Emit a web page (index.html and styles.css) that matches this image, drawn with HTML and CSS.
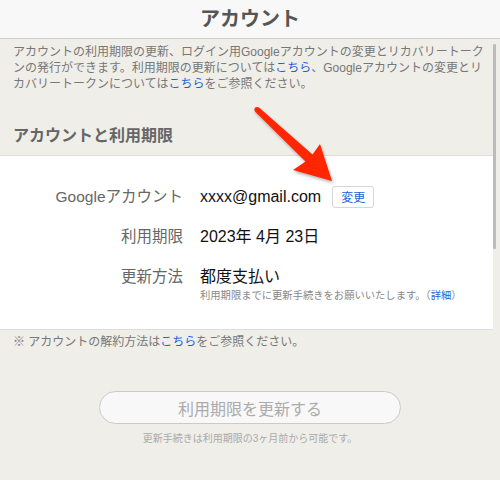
FILE: index.html
```html
<!DOCTYPE html>
<html lang="ja">
<head>
    <meta charset="UTF-8">
    <meta name="viewport" content="width=device-width, initial-scale=1.0">
    <title>アカウント</title>
    <link rel="stylesheet" href="styles.css">
</head>
<body>
    <header class="title-bar">
        <h1>アカウント</h1>
    </header>

    <main class="content">
        <p class="intro">アカウントの利用期限の更新、ログイン用Googleアカウントの変更とリカバリートークンの発行ができます。利用期限の更新については<a href="#">こちら</a>、Googleアカウントの変更とリカバリートークンについては<a href="#">こちら</a>をご参照ください。</p>

        <h2 class="section-title">アカウントと利用期限</h2>

        <section class="panel">
            <div class="row">
                <div class="label">Googleアカウント</div>
                <div class="value">xxxx@gmail.com<button class="small-btn">変更</button></div>
            </div>
            <div class="row">
                <div class="label">利用期限</div>
                <div class="value">2023年 4月 23日</div>
            </div>
            <div class="row">
                <div class="label">更新方法</div>
                <div class="value">
                    都度支払い
                    <div class="hint">利用期限までに更新手続きをお願いいたします。（<a href="#">詳細</a>）</div>
                </div>
            </div>
        </section>

        <p class="note">※ アカウントの解約方法は<a href="#">こちら</a>をご参照ください。</p>

        <div class="renew">
            <button class="renew-btn" disabled>利用期限を更新する</button>
            <p class="renew-hint">更新手続きは利用期限の3ヶ月前から可能です。</p>
        </div>
    </main>

    <div class="scrollbar"></div>

    <!-- annotation arrow -->
    <svg class="arrow" width="100" height="100" viewBox="240 95 100 100">
        <g fill="#ff2600">
            <circle cx="257" cy="109.5" r="2.6"/>
            <polygon points="259,107.5 312.5,154.5 320,144 332,181 293,170 305.5,161.5 255,111.5"/>
        </g>
    </svg>
</body>
</html>
```

FILE: styles.css
```css
body {
    margin: 0;
    padding: 0;
    background-color: #efeee9;
    font-family: "Liberation Sans", "Noto Sans CJK JP", sans-serif;
    color: #777;
    width: 500px;
    height: 480px;
    overflow: hidden;
    position: relative;
}
a {
    color: #1f5fd6;
    text-decoration: none;
}
.title-bar {
    height: 38px;
    background: #f8f8f8;
    border-bottom: 1px solid #cfcfcf;
    text-align: center;
}
.title-bar h1 {
    margin: 0;
    font-size: 20px;
    line-height: 38px;
    font-weight: bold;
    color: #555;
}
.content {
    padding-top: 5px;
}
.intro {
    margin: 0;
    padding: 0 14px 0 13px;
    font-size: 12px;
    line-height: 16px;
    color: #777;
}
.section-title {
    margin: 34px 0 9px;
    padding-left: 13px;
    font-size: 16px;
    line-height: 20px;
    font-weight: bold;
    color: #666;
}
.panel {
    background: #fff;
    border-top: 1px solid #ddd;
    border-bottom: 1px solid #ddd;
    padding: 29px 0 26px;
    margin-right: 7px;
}
.row {
    display: flex;
    align-items: flex-start;
    margin-bottom: 16px;
    line-height: 24px;
}
.row:last-child {
    margin-bottom: 0;
}
.label {
    width: 183px;
    text-align: right;
    font-size: 15.5px;
    color: #666;
}
.value {
    margin-left: 17px;
    font-size: 16px;
    color: #111;
    display: flex;
    flex-direction: column;
    align-items: flex-start;
}
.row:first-child .value {
    flex-direction: row;
    align-items: center;
}
.small-btn {
    margin-left: 11px;
    width: 42px;
    height: 22px;
    padding: 0;
    background: #fff;
    border: 1px solid #d6d6d6;
    border-radius: 3px;
    color: #1f5fd6;
    font-family: "Noto Sans CJK JP", sans-serif;
    font-size: 12px;
    line-height: 20px;
}
.hint {
    font-size: 10.3px;
    line-height: 14px;
    color: #888;
}
.note {
    margin: 4px 0 0;
    padding-left: 13px;
    font-size: 12px;
    line-height: 16px;
    color: #777;
}
.renew {
    display: flex;
    flex-direction: column;
    align-items: center;
    margin-top: 41px;
}
.renew-btn {
    width: 302px;
    height: 33px;
    padding: 0;
    background: #f8f8f8;
    border: 1px solid #cacaca;
    border-radius: 17px;
    color: #ababab;
    font-family: "Noto Sans CJK JP", sans-serif;
    font-size: 16px;
}
.renew-hint {
    margin: 8px 0 0;
    font-size: 10px;
    line-height: 14px;
    color: #aaa;
}
.scrollbar {
    position: absolute;
    left: 493px;
    top: 44px;
    width: 3px;
    height: 205px;
    background: #bcbcbc;
    border-radius: 1px;
}
.arrow {
    position: absolute;
    left: 240px;
    top: 95px;
    filter: drop-shadow(1px 2px 1.5px rgba(0, 0, 0, 0.3));
}
```
